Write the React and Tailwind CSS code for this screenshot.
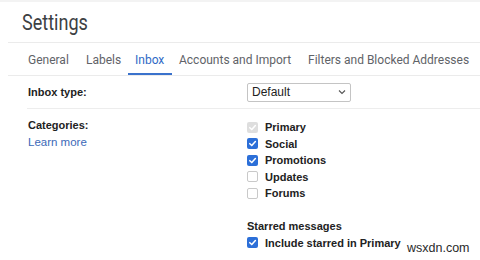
import React from "react";

const tabs = [
  { label: "General", w: "w-[58px]" },
  { label: "Labels", w: "w-[49px]" },
  { label: "Inbox", w: "w-[44px]", active: true },
  { label: "Accounts and Import", w: "w-[129px]" },
  { label: "Filters and Blocked Addresses", w: "w-[179px]" },
];

const categories = [
  { label: "Primary", state: "disabled" },
  { label: "Social", state: "on" },
  { label: "Promotions", state: "on" },
  { label: "Updates", state: "off" },
  { label: "Forums", state: "off" },
];

function Checkbox({ state }) {
  if (state === "off") {
    return <span className="w-[11px] h-[11px] rounded-[2px] border border-[#c9c9c9] bg-white shrink-0" />;
  }
  const bg = state === "disabled" ? "bg-[#dedede]" : "bg-[#2c6fd8]";
  return (
    <span className={`w-[11px] h-[11px] rounded-[2px] ${bg} shrink-0 flex items-center justify-center`}>
      <svg width="9" height="9" viewBox="0 0 10 10">
        <polyline points="2,5.2 4.2,7.3 8.2,2.8" fill="none" stroke="white" strokeWidth="1.7" strokeLinecap="round" strokeLinejoin="round" />
      </svg>
    </span>
  );
}

function Row({ state, label }) {
  return (
    <div className="flex items-center h-[16.5px] leading-[16.5px]">
      <Checkbox state={state} />
      <span className="ml-[7px] text-[11px] font-bold text-[#222]">{label}</span>
    </div>
  );
}

export default function App() {
  return (
    <div className="relative w-[480px] h-[260px] bg-white overflow-hidden font-['Liberation_Sans',Arial,sans-serif]">
      <div className="h-[2px] bg-[#f3f3f3]" />

      <div className="h-[40px] pl-[22px] pt-[7px] font-['Roboto',sans-serif] text-[22px] leading-[28px] text-[#3c4043]">
        <span className="inline-block origin-left scale-x-[0.82]">Settings</span>
      </div>

      <div className="ml-[8px] border-t border-[#ebebeb]" />

      <div className="flex pl-[21px] h-[32px] font-['Roboto',sans-serif] text-[12px] leading-[16px]">
        {tabs.map((t) => (
          <div
            key={t.label}
            className={`${t.w} shrink-0 whitespace-nowrap pl-[7px] pt-[9px] ${
              t.active ? "text-[#2f6ac6] border-b-2 border-[#3a72cc]" : "text-[#5f6368]"
            }`}
          >
            {t.label}
          </div>
        ))}
      </div>

      <div className="ml-[8px] border-t border-[#ebebeb]" />

      <div className="flex items-center h-[32px] pl-[28px]">
        <div className="w-[219px] text-[11px] font-bold text-[#222] pt-[1px]">Inbox type:</div>
        <div className="w-[104px] h-[19px] border border-[#c4c4c4] rounded-[2px] flex items-center justify-between pl-[4px] pr-[4px]">
          <span className="text-[12px] text-[#222]">Default</span>
          <svg width="8" height="6" viewBox="0 0 8 6">
            <polyline points="1,1.5 4,4.5 7,1.5" fill="none" stroke="#555" strokeWidth="1.1" />
          </svg>
        </div>
      </div>

      <div className="ml-[27px] border-t border-[#ededed]" />

      <div className="flex pl-[28px]">
        <div className="w-[219px] pt-[8px] leading-[17px] text-[11px]">
          <div className="font-bold text-[#222]">Categories:</div>
          <div className="text-[11.5px] text-[#3b69b8]">Learn more</div>
        </div>
        <div className="pt-[10px]">
          {categories.map((c) => (
            <Row key={c.label} state={c.state} label={c.label} />
          ))}
          <div className="mt-[16px] h-[17px] leading-[17px] text-[11px] font-bold text-[#222]">Starred messages</div>
          <Row state="on" label="Include starred in Primary" />
        </div>
      </div>

      <div className="absolute left-[406px] top-[240px] text-[12.5px] leading-[16px] text-[#2a2a2a] bg-white pl-[1px]">
        wsxdn.com
      </div>
    </div>
  );
}
